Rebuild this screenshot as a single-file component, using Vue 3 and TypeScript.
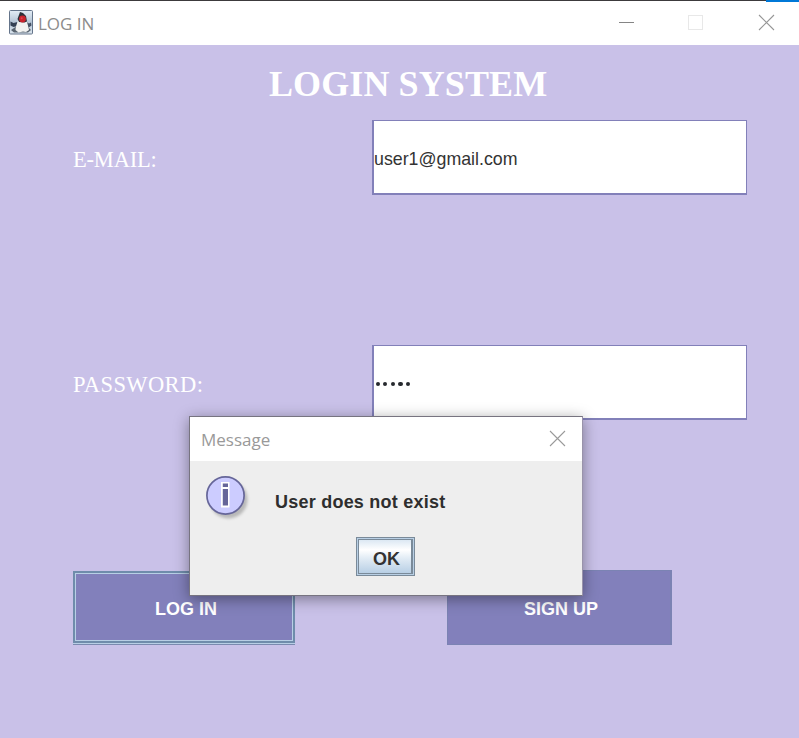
<script setup lang="ts">
import { ref } from 'vue'

const email = ref<string>('user1@gmail.com')
const passwordLength = 5
</script>

<template>
  <div class="window">
    <header class="titlebar">
      <svg class="duke" width="25" height="25" viewBox="0 0 25 25">
        <defs>
          <linearGradient id="duke-bg" x1="0" y1="0" x2="0" y2="1">
            <stop offset="0" stop-color="#e3edf6" />
            <stop offset="0.5" stop-color="#b4c4d5" />
            <stop offset="1" stop-color="#dbe5ee" />
          </linearGradient>
        </defs>
        <rect x="0.5" y="0.5" width="23" height="23.5" rx="1" fill="url(#duke-bg)" stroke="#64748a" />
        <path d="M1.500 11.500l3 1.500 4-1 0 4-4 1-3-1.500z" fill="#344154" />
        <path d="M17.500 12l2.500 1.500 2-1 .5 3-3.500 2.500z" fill="#445063" />
        <path d="M2 20l6-4h10l4 4-3 2.500H5z" fill="#596470" />
        <path d="M8.500 12l1-4h7.500c1 4 2.500 9 3 12l-3 2-3-.5-4.500 1-3-2.500C6.500 17 7.500 15 8.500 12z" fill="#f1f2f1" />
        <path d="M11 2l3 1 3 3 1 5.500-2.500 1-5.500-.5L8.500 9z" fill="#2b3039" />
        <circle cx="13.500" cy="9" r="3.400" fill="#c9232d" />
        <circle cx="12.700" cy="8.200" r="1" fill="#e0444e" />
      </svg>
      <span class="title">LOG IN</span>
      <svg class="controls" width="160" height="20" viewBox="0 0 160 20" fill="none">
        <path d="M0 9.500H15" stroke="#858585" />
        <rect x="69.500" y="2.500" width="14" height="14" stroke="#e8e8e8" />
        <path d="M140 2l15 15M155 2l-15 15" stroke="#969696" stroke-width="1.100" />
      </svg>
    </header>

    <main class="content">
      <h1>LOGIN SYSTEM</h1>
      <div class="row">
        <label class="email-label" for="email">E-MAIL:</label>
        <input id="email" v-model="email" class="field" type="text" spellcheck="false" />
      </div>
      <div class="row">
        <label>PASSWORD:</label>
        <div class="field dots">
          <i v-for="n in passwordLength" :key="n"></i>
        </div>
      </div>
      <div class="actions">
        <button class="action login">LOG IN</button>
        <button class="action signup">SIGN UP</button>
      </div>
    </main>

    <section class="dialog" role="dialog">
      <header class="dialog-bar">
        <span class="title dialog-title">Message</span>
        <svg class="close" width="17" height="17" viewBox="0 0 17 17" fill="none">
          <path d="M1 1l15 15M16 1L1 16" stroke="#9a9a9a" stroke-width="1.100" />
        </svg>
      </header>
      <div class="dialog-body">
        <div class="message">
          <svg class="info" width="48" height="48" viewBox="0 0 48 48">
            <defs>
              <filter id="info-shadow" x="-20%" y="-20%" width="150%" height="150%">
                <feGaussianBlur stdDeviation="1.600" />
              </filter>
            </defs>
            <circle cx="23.500" cy="24.500" r="19" fill="#777" opacity="0.450" filter="url(#info-shadow)" />
            <circle cx="20.500" cy="20.500" r="18.600" fill="#ccccff" stroke="#666699" stroke-width="1.700" />
            <path d="M16 7h8.500v6.500H16zM16 13h8.500v19.500H16z" fill="#fff" />
            <path d="M17.800 8.500h5.200v3.500h-5.200zM17.800 14h5.200v16.500h-5.200z" fill="#666699" />
          </svg>
          <p>User does not exist</p>
        </div>
        <button class="ok"><span>OK</span></button>
      </div>
    </section>
  </div>
</template>

<style>
body {
  margin: 0;
  overflow: hidden;
}
</style>

<style scoped>
* {
  box-sizing: border-box;
}
.window {
  position: relative;
  display: flex;
  flex-direction: column;
  width: 799px;
  height: 738px;
  background: #c9c1e8;
  font-family: "Liberation Sans", Arial, sans-serif;
  overflow: hidden;
}
.titlebar {
  display: flex;
  align-items: center;
  height: 45px;
  padding: 0 20px 0 9px;
  background:
    linear-gradient(#0078d7, #0078d7) top right / 33px 2px no-repeat,
    linear-gradient(#3c3a3c, #3c3a3c) top / 100% 1px no-repeat,
    #fff;
  flex: none;
}
.title {
  font-family: "Open Sans", "Noto Sans", sans-serif;
  font-weight: 400;
  font-size: 17px;
  line-height: 24px;
  color: #8c8c8c;
}
.titlebar .title {
  margin: 2px 0 0 4px;
}
.controls {
  margin-left: auto;
}
.content {
  flex: 1;
  padding: 0 52px 0 73px;
}
h1 {
  margin: 0;
  height: 75px;
  padding: 19px 0 0 196px;
  font: bold 36px/40px "Liberation Serif", "Times New Roman", serif;
  letter-spacing: 0.1px;
  color: #fff;
  white-space: nowrap;
}
.row {
  display: grid;
  grid-template-columns: 299px 375px;
  height: 75px;
  align-items: center;
}
.row + .row {
  margin-top: 150px;
}
label {
  padding-top: 4px;
  font: 22.5px/26px "Liberation Serif", "Times New Roman", serif;
  letter-spacing: 0.4px;
  color: #fff;
}
.email-label {
  letter-spacing: -0.2px;
}
.field {
  width: 375px;
  height: 75px;
  padding: 4px 0 0;
  border: solid #8280b9;
  border-width: 1px 1px 2px 2px;
  border-radius: 0;
  outline: 0;
  background: #fff;
  font: 17.8px "Liberation Sans", Arial, sans-serif;
  color: #333;
}
.dots {
  display: flex;
  align-items: center;
  gap: 3.2px;
  padding: 4px 0 0 1.5px;
}
.dots i {
  width: 4.4px;
  height: 4.4px;
  border-radius: 50%;
  background: #26292e;
}
.actions {
  display: flex;
  justify-content: space-between;
  width: 599px;
  margin-top: 150px;
}
.action {
  width: 225px;
  height: 75px;
  padding: 4px 0 0 3px;
  border: 1px solid #7a8aaf;
  background: #8280bb;
  font: bold 18px "Liberation Sans", Arial, sans-serif;
  color: #fff;
}
.login {
  height: 72px;
  width: 222px;
  margin-top: 1px;
  border: 2px solid #6f8cab;
  box-shadow: inset 0 0 0 1px #b8cfe5, 0 1px 0 #b8cfe5, 0 2px 0 #7a8aaf;
  padding: 5px 0 0 4px;
}
.signup {
  border-color: #7b83b3;
  border-right-width: 2px;
  padding-left: 4px;
}
.dialog {
  position: absolute;
  left: 189px;
  top: 416px;
  width: 394px;
  height: 180px;
  border: 1px solid #777480;
  border-right-color: #9993aa;
  background: #eee;
  box-shadow: 0 3px 14px rgba(0, 0, 0, 0.4);
}
.dialog-bar {
  display: flex;
  align-items: center;
  justify-content: space-between;
  height: 44px;
  padding: 0 16px 0 11px;
  background: #fff;
}
.close {
  margin-bottom: 1px;
}
.dialog-title {
  padding-top: 1px;
  color: #999;
}
.dialog-body {
  display: flex;
  flex-direction: column;
  align-items: center;
}
.message {
  display: flex;
  width: 100%;
  height: 76px;
  padding: 14px 15px 0;
}
.message p {
  margin: 15px 0 0 22px;
  font: bold 18px/24px "Liberation Sans", Arial, sans-serif;
  letter-spacing: 0.23px;
  color: #2e2e2e;
}
.ok {
  width: 59px;
  height: 39px;
  margin-right: 1px;
  padding: 1px;
  border: 1px solid #7a8a99;
  background: #b8cfe5;
}
.ok span {
  display: grid;
  place-items: center;
  height: 35px;
  padding: 5px 0 0 3px;
  border: 1px solid #7a8a99;
  border-right-width: 2px;
  background: linear-gradient(#dce8f3, #fff 30%, #e2ecf5 55%, #b8cfe5);
  font: bold 18px "Liberation Sans", Arial, sans-serif;
  color: #333;
}
</style>
